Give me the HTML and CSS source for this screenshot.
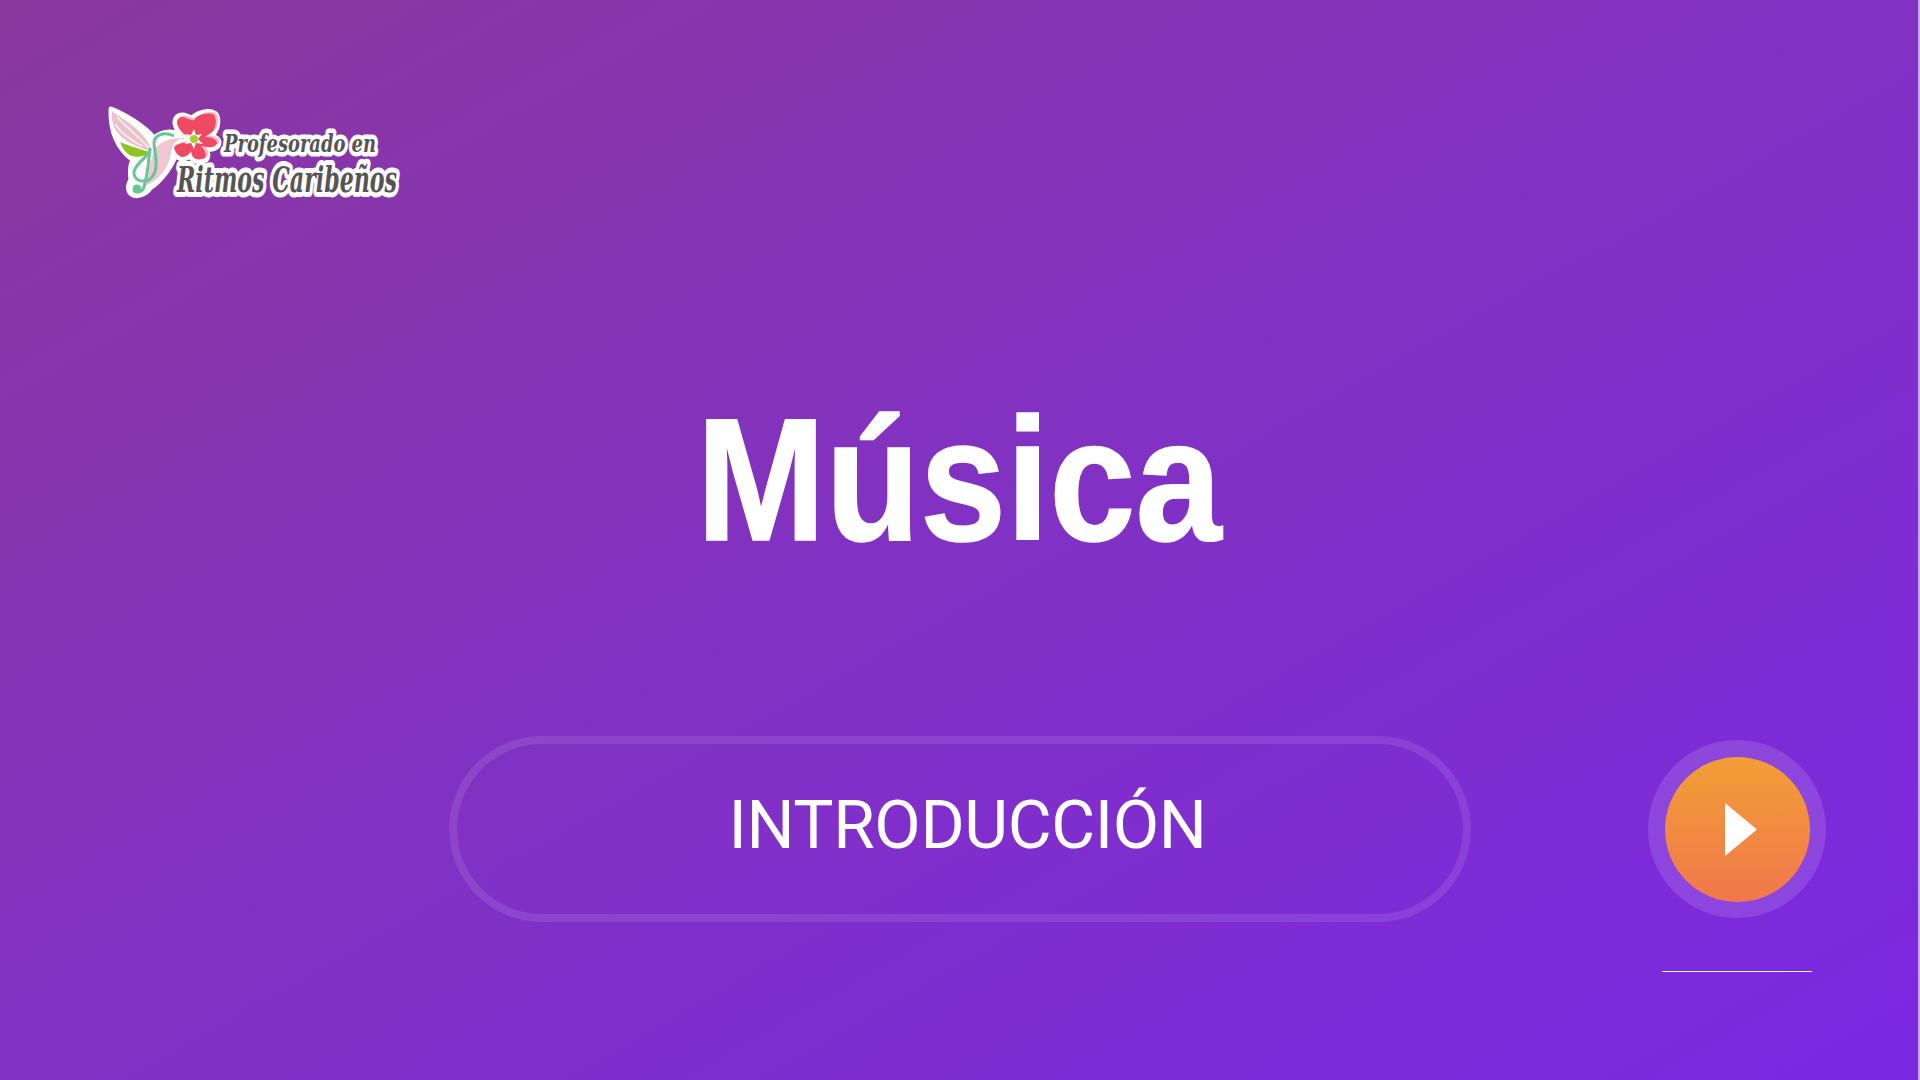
FILE: index.html
```html
<!DOCTYPE html>
<html lang="es">
<head>
<meta charset="utf-8">
<title>Música</title>
<link rel="stylesheet" href="styles.css">
</head>
<body>
<main class="slide">
  <svg class="logo" viewBox="100 100 440 115" width="440" height="115" aria-label="Profesorado en Ritmos Caribeños">
    <defs>
      <path id="flower" d="M191 139C184 137 176 130 175 123C175 117 180 116 184 118C189 120 193 122 193 118C198 114 207 112 212 115C215 119 214 127 211 131C208 134 205 135 203 137C208 137 213 138 215 142C215 146 210 148 205 147C203 147 201 146 199 146C203 150 205 155 203 158C199 160 193 160 191 157C190 155 189 153 189 151C187 154 184 157 180 157C176 156 173 152 172 148C172 145 178 143 184 143C186 143 188 141 191 139Z"/>
    </defs>
    <path class="blob" d="M109 109C122 114 142 126 152 138C160 131 170 131 178 134L176 148C172 164 160 180 148 188C144 194 136 197 131 195C126 193 125 186 129 180C128 172 128 165 131 160C118 150 108 135 109 109Z"/>
    <use href="#flower" class="halo"/>
    <path class="wing" d="M110 111C120 119 143 130 150 151C135 148 117 139 112 127C110 121 109 116 110 111Z"/>
    <path class="wing-line" d="M115 117C124 127 136 136 147 148M113 124C120 134 130 141 140 146"/>
    <path class="leaf" d="M118 142C128 146 140 150 149 152C141 158 131 158 126 154C122 151 120 147 118 142Z"/>
    <path class="body" d="M180 138C172 141 170 146 169 153C167 168 157 180 143 186C146 172 148 160 153 150C156 144 164 138 180 138Z"/>
    <path class="clef" d="M172 136C162 131 153 135 152 142C152 150 155 158 154 167C153 176 147 182 141 181C134 181 130 175 133 169C136 163 143 158 148 152M148 148C147 160 145 176 142 187C141 192 135 193 132 190"/>
    <circle class="clef-dot" cx="135" cy="189" r="4.500"/>
    <use href="#flower" class="flower-shadow"/>
    <use href="#flower" class="flower"/>
    <path class="star" d="M192 129L194 135L200 134L196 139L201 144L194 143L192 149L189 143L183 144L187 139L183 134L189 135Z"/>
    <circle class="pistil" cx="192" cy="139" r="4"/>
    <text class="logo-top" x="222" y="152" textLength="152" lengthAdjust="spacingAndGlyphs">Profesorado en</text>
    <text class="logo-bottom" x="175" y="192" textLength="220" lengthAdjust="spacingAndGlyphs">Ritmos Caribeños</text>
  </svg>
  <h1 class="title">Música</h1>
  <div class="actions">
    <div class="pill"><span class="pill-label">INTRODUCCIÓN</span></div>
    <div class="play-col">
      <div class="ring">
        <button class="play" type="button" aria-label="Reproducir">
          <svg class="play-icon" viewBox="0 0 32 53" width="32" height="53"><path d="M0 0L32 26.500L0 53Z"/></svg>
        </button>
      </div>
      <div class="progress"></div>
    </div>
  </div>
</main>
</body>
</html>
```
FILE: styles.css
```css
* { box-sizing: border-box; }
html, body { margin: 0; padding: 0; }
body { width: 1920px; height: 1080px; overflow: hidden; }

.slide {
  width: 1920px;
  height: 1080px;
  padding: 100px 0 0 0;
  display: flex;
  flex-direction: column;
  background: linear-gradient(to bottom right, #8a389d 0%, #8232c0 45%, #7b28e3 100%);
  border-right: 2px solid #c8a8f0;
}

.logo { display: block; margin-left: 102px; flex: none; }
.logo-top, .logo-bottom {
  font-family: "DejaVu Serif", serif;
  font-style: italic;
  font-weight: 700;
  fill: #555;
  stroke: #fff;
  paint-order: stroke;
  stroke-linejoin: round;
}
.logo-top { font-size: 25px; stroke-width: 9px; }
.logo-bottom { font-size: 35px; stroke-width: 10px; }
.blob { fill: #fff; stroke: #fff; stroke-width: 5px; stroke-linejoin: round; }
.halo { stroke: #fff; stroke-width: 9px; stroke-linejoin: round; fill: #fff; }
.wing { fill: #edc0cd; }
.wing-line { fill: none; stroke: #fff; stroke-width: 1.500px; opacity: .8; }
.leaf { fill: #8fc31f; }
.body { fill: #efc6d2; }
.clef { fill: none; stroke: #68c596; stroke-width: 3px; }
.clef-dot { fill: #68c596; }
.flower { fill: #ee4a64; }
.flower-shadow { fill: #f6b9c6; transform: translate(2.500px, -1.500px); }
.star { fill: #fff; }
.pistil { fill: #a8cf2c; }

.title {
  margin: 165px 0 0;
  height: 200px;
  font-family: "Liberation Sans", Arial, sans-serif;
  font-size: 175px;
  line-height: 200px;
  font-weight: 700;
  color: #fff;
  text-align: center;
  -webkit-text-stroke: 1.500px #fff;
  transform: scaleX(.885);
}

.actions {
  margin: 156px 0 0 449px;
  display: flex;
  align-items: flex-start;
  gap: 177px;
}

.pill {
  width: 1022px;
  height: 186px;
  padding: 0 0 10px 15px;
  border: 8px solid rgba(255, 255, 255, .1);
  border-radius: 93px;
  display: flex;
  align-items: center;
  justify-content: center;
}
.pill-label {
  font-family: Roboto, "Liberation Sans", sans-serif;
  font-size: 67.500px;
  letter-spacing: -.400px;
  font-weight: 400;
  color: #fff;
}

.play-col {
  width: 178px;
  margin-top: 4px;
  display: flex;
  flex-direction: column;
  align-items: center;
  gap: 53px;
}
.ring {
  width: 178px;
  height: 178px;
  border-radius: 50%;
  background: rgba(255, 255, 255, .13);
  display: flex;
  align-items: center;
  justify-content: center;
}
.play {
  width: 145px;
  height: 145px;
  border: 0;
  padding: 0 0 0 8px;
  border-radius: 50%;
  background: linear-gradient(#f19f36, #f1774c);
  display: flex;
  align-items: center;
  justify-content: center;
}
.play-icon { fill: #fff; display: block; }
.progress { width: 150px; height: 1px; background: #fff; }
```
